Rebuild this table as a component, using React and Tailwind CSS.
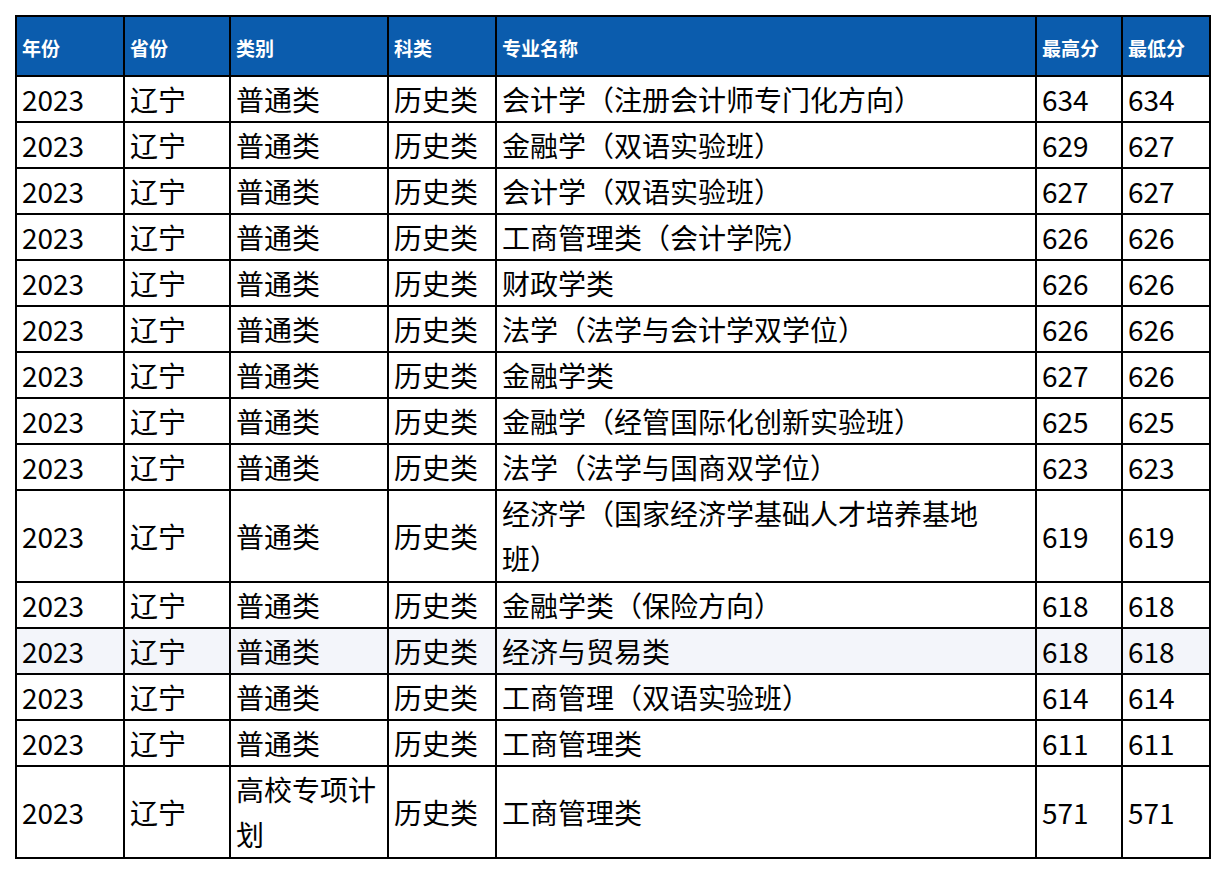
import React from "react";

const rows = [
  ["普通类", "会计学（注册会计师专门化方向）", "634", "634"],
  ["普通类", "金融学（双语实验班）", "629", "627"],
  ["普通类", "会计学（双语实验班）", "627", "627"],
  ["普通类", "工商管理类（会计学院）", "626", "626"],
  ["普通类", "财政学类", "626", "626"],
  ["普通类", "法学（法学与会计学双学位）", "626", "626"],
  ["普通类", "金融学类", "627", "626"],
  ["普通类", "金融学（经管国际化创新实验班）", "625", "625"],
  ["普通类", "法学（法学与国商双学位）", "623", "623"],
  ["普通类", "经济学（国家经济学基础人才培养基地班）", "619", "619", true],
  ["普通类", "金融学类（保险方向）", "618", "618"],
  ["普通类", "经济与贸易类", "618", "618"],
  ["普通类", "工商管理（双语实验班）", "614", "614"],
  ["普通类", "工商管理类", "611", "611"],
  ["高校专项计划", "工商管理类", "571", "571", true],
];

const headers = ["年份", "省份", "类别", "科类", "专业名称", "最高分", "最低分"];
const widths = ["w-[108px]", "w-[106px]", "w-[158px]", "w-[108px]", "w-[540px]", "w-[86px]", "w-[88px]"];

export default function App() {
  return (
    <div
      className="min-h-screen bg-white pl-[15px] pt-[15px]"
      style={{ fontFamily: '"Noto Sans CJK SC", "Noto Sans", sans-serif' }}
    >
      <table className="table-fixed border-collapse w-[1196px] text-black">
        <colgroup>
          {widths.map((w, i) => (
            <col key={i} className={w} />
          ))}
        </colgroup>
        <thead>
          <tr className="bg-[#0b5cad]">
            {headers.map((h) => (
              <th
                key={h}
                className="border-2 border-black h-[60px] pl-[5px] pt-[4px] text-left align-middle text-[19px] font-bold text-white"
              >
                {h}
              </th>
            ))}
          </tr>
        </thead>
        <tbody>
          {rows.map((r, i) => {
            const lh = r[4] ? "leading-[45px]" : "leading-[44px]";
            const cell = `border-2 border-black pl-[5px] text-[28px] align-middle ${lh}`;
            return (
              <tr key={i} className={i === 11 ? "bg-[#f3f5fa]" : "bg-white"}>
                <td className={cell}>2023</td>
                <td className={cell}>辽宁</td>
                <td className={cell}>{r[0]}</td>
                <td className={cell}>历史类</td>
                <td className={`${cell} pr-[40px]`}>{r[1]}</td>
                <td className={cell}>{r[2]}</td>
                <td className={cell}>{r[3]}</td>
              </tr>
            );
          })}
        </tbody>
      </table>
    </div>
  );
}
